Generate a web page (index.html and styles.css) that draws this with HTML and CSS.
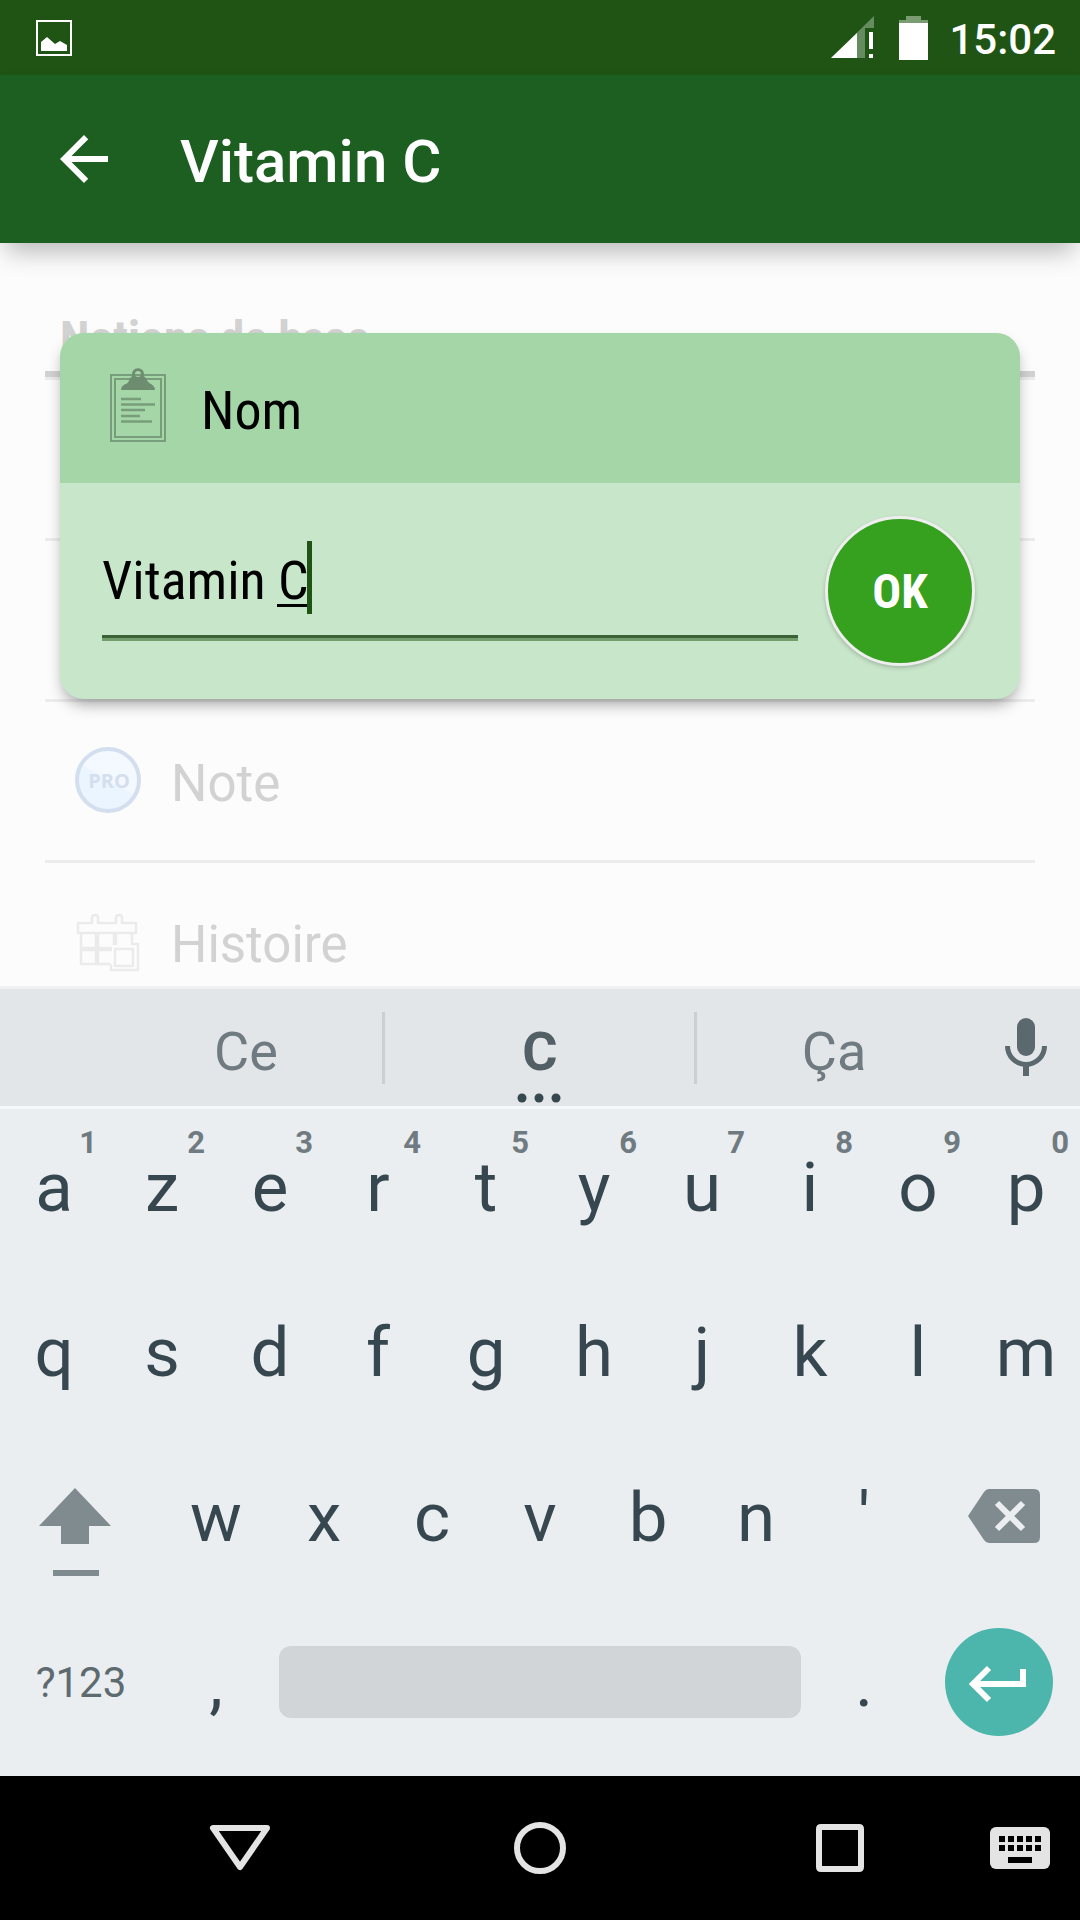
FILE: index.html
```html
<!DOCTYPE html>
<html lang="fr">
<head>
<meta charset="utf-8">
<meta name="viewport" content="width=device-width, initial-scale=1">
<title>Vitamin C</title>
<link rel="stylesheet" href="styles.css">
</head>
<body>
<div class="app">
  <div class="status-bar">
    <svg class="status-picture" width="36" height="36" viewBox="0 0 36 36" aria-hidden="true">
      <rect x="1" y="1" width="34" height="34" fill="none" stroke="#fff" stroke-width="2"/>
      <path d="M5 31V22L11 17L19 24L24 21L31 25V31Z" fill="#fff"/>
    </svg>
    <svg class="status-signal" width="43" height="43" viewBox="0 0 43 43" aria-hidden="true">
      <path d="M0 42L43 0V12H34V42Z" fill="#658c5e"/>
      <path d="M0 42L26 17V42Z" fill="#fff"/>
      <path d="M38 16H42V33H38ZM38 38H42V42H38Z" fill="#fff"/>
    </svg>
    <svg class="status-battery" width="29" height="44" viewBox="0 0 29 44" aria-hidden="true">
      <path d="M7 0H22V4H29V8H0V4H7Z" fill="#7b9b73"/>
      <path d="M0 7H29V44H0Z" fill="#fff"/>
    </svg>
    <time class="clock">15:02</time>
  </div>

  <header class="app-bar">
    <button class="back" type="button" aria-label="Retour">
      <svg width="72" height="72" viewBox="0 0 24 24" aria-hidden="true"><path fill="#fff" d="M20 11H7.83l5.59-5.59L12 4l-8 8 8 8 1.41-1.41L7.83 13H20v-2z"/></svg>
    </button>
    <h1 class="title">Vitamin C</h1>
  </header>

  <main class="content">
    <section class="details">
      <h2 class="section-title">Notions de base</h2>
      <ul class="rows">
        <li class="row"></li>
        <li class="row"></li>
        <li class="row">
          <svg class="row-icon" width="68" height="68" viewBox="0 0 68 68" aria-hidden="true">
            <circle cx="34" cy="33" r="31" fill="#f4f8ff"/>
            <path d="M7.200 17.500A31 31 0 0 0 60.800 48.500Z" fill="#eaf5ff"/>
            <circle cx="34" cy="33" r="31" fill="none" stroke="#d3dfee" stroke-width="4"/>
            <text class="pro" x="35" y="41" text-anchor="middle">PRO</text>
          </svg>
          <span class="row-label">Note</span>
        </li>
        <li class="row">
          <svg class="row-icon" width="68" height="68" viewBox="0 -1 68 68" aria-hidden="true">
            <g fill="none" stroke="#ebebeb" stroke-width="2.500" stroke-linejoin="round">
              <path d="M4 14H18V9Q18 6 21 6T24 9V14H42V9Q42 6 45 6T48 9V14H62V24H4Z"/>
              <path d="M7 24V55H36M7 39H38M7 41H38M22 24V55M24 24V55M40 24V36M42 24V36M58 24V36"/>
              <rect x="41" y="40" width="18" height="17"/>
              <path d="M58 35H64V61H37V55"/>
            </g>
          </svg>
          <span class="row-label">Histoire</span>
        </li>
      </ul>
    </section>

    <form class="dialog">
      <div class="dialog-head">
        <svg width="56" height="80" viewBox="0 0 56 80" aria-hidden="true">
          <g fill="none" stroke="#789d7a" stroke-width="2">
            <rect x="1" y="7" width="54" height="66"/>
            <rect x="5" y="11" width="46" height="58"/>
          </g>
          <path fill="#6e8d70" fill-rule="evenodd" d="M11 22Q11 17 17 15.500Q19 14 20 10L22.300 8A6 6 0 1 1 33.700 8L36 10Q37 14 40 15.500Q45 18 45 22ZM28 3A3 3 0 1 0 28 9A3 3 0 1 0 28 3Z"/>
          <path stroke="#789d7a" stroke-width="2.500" d="M11 31H31M11 36.500H45M11 42H35M11 48H30M11 53.500H42"/>
        </svg>
        <label class="dialog-label" for="name">Nom</label>
      </div>
      <div class="dialog-body">
        <div class="field">
          <input class="name-input" id="name" type="text" value="Vitamin C">
          <span class="composing"></span>
          <span class="caret"></span>
        </div>
        <button class="ok" type="button">OK</button>
      </div>
    </form>
  </main>

  <section class="keyboard" aria-label="Clavier">
    <div class="suggestions">
      <button class="suggestion" type="button">Ce</button>
      <button class="suggestion best" type="button">C
        <svg class="more" width="44" height="10" viewBox="0 0 44 10" aria-hidden="true"><g fill="#37474f"><circle cx="5" cy="5" r="4.500"/><circle cx="22" cy="5" r="4.500"/><circle cx="39" cy="5" r="4.500"/></g></svg>
      </button>
      <button class="suggestion" type="button">Ça</button>
      <button class="mic" type="button" aria-label="Saisie vocale">
        <svg width="44" height="60" viewBox="0 0 44 60" aria-hidden="true">
          <rect x="13" y="0" width="18" height="38" rx="9" fill="#5b696f"/>
          <path d="M3.500 28A18.500 18.500 0 0 0 40.500 28" fill="none" stroke="#5b696f" stroke-width="5"/>
          <path d="M19 47H25V58H19Z" fill="#5b696f"/>
        </svg>
      </button>
    </div>
    <div class="keys">
      <button class="key" type="button">a<span class="hint">1</span></button>
      <button class="key" type="button">z<span class="hint">2</span></button>
      <button class="key" type="button">e<span class="hint">3</span></button>
      <button class="key" type="button">r<span class="hint">4</span></button>
      <button class="key" type="button">t<span class="hint">5</span></button>
      <button class="key" type="button">y<span class="hint">6</span></button>
      <button class="key" type="button">u<span class="hint">7</span></button>
      <button class="key" type="button">i<span class="hint">8</span></button>
      <button class="key" type="button">o<span class="hint">9</span></button>
      <button class="key" type="button">p<span class="hint">0</span></button>

      <button class="key" type="button">q</button>
      <button class="key" type="button">s</button>
      <button class="key" type="button">d</button>
      <button class="key" type="button">f</button>
      <button class="key" type="button">g</button>
      <button class="key" type="button">h</button>
      <button class="key" type="button">j</button>
      <button class="key" type="button">k</button>
      <button class="key" type="button">l</button>
      <button class="key" type="button">m</button>

      <button class="key wide shift" type="button" aria-label="Majuscule">
        <svg width="72" height="120" viewBox="0 0 72 120" aria-hidden="true"><path fill="#808b8f" d="M36 31L72 69H50V87H22V69H0ZM14 113H60V119H14Z"/></svg>
      </button>
      <button class="key" type="button">w</button>
      <button class="key" type="button">x</button>
      <button class="key" type="button">c</button>
      <button class="key" type="button">v</button>
      <button class="key" type="button">b</button>
      <button class="key" type="button">n</button>
      <button class="key" type="button">'</button>
      <button class="key wide delete" type="button" aria-label="Effacer">
        <svg width="72" height="56" viewBox="0 0 72 56" aria-hidden="true">
          <path fill="#808b8f" d="M0 27L16 3Q18 0 21 0H66Q72 0 72 6V48Q72 54 66 54H21Q18 54 16 51Z"/>
          <path stroke="#ebeef1" stroke-width="6" d="M29 14L55 40M55 14L29 40"/>
        </svg>
      </button>

      <button class="key wide symbols" type="button">?123</button>
      <button class="key" type="button">,</button>
      <button class="key space" type="button" aria-label="Espace"><span class="space-bar"></span></button>
      <button class="key" type="button">.</button>
      <button class="key wide" type="button" aria-label="Entrée">
        <svg width="108" height="108" viewBox="0 0 108 108" aria-hidden="true">
          <circle cx="54" cy="54" r="54" fill="#4db6ac"/>
          <path d="M78 41V56H29M44 40L28 56L44 72" fill="none" stroke="#fff" stroke-width="6"/>
        </svg>
      </button>
    </div>
  </section>

  <nav class="nav-bar">
    <button class="nav-button" type="button" aria-label="Masquer le clavier">
      <svg width="62" height="48" viewBox="0 0 62 48" aria-hidden="true"><path d="M4 4H58L31 43Z" fill="none" stroke="#e4e4e4" stroke-width="6" stroke-linejoin="round"/></svg>
    </button>
    <button class="nav-button" type="button" aria-label="Accueil">
      <svg width="52" height="52" viewBox="0 0 52 52" aria-hidden="true"><circle cx="26" cy="26" r="23" fill="none" stroke="#e4e4e4" stroke-width="6"/></svg>
    </button>
    <button class="nav-button" type="button" aria-label="Applications récentes">
      <svg width="48" height="48" viewBox="0 0 48 48" aria-hidden="true"><path fill="#e4e4e4" fill-rule="evenodd" d="M5 0H43Q48 0 48 5V43Q48 48 43 48H5Q0 48 0 43V5Q0 0 5 0ZM6 6V42H42V6Z"/></svg>
    </button>
    <button class="nav-button" type="button" aria-label="Changer de clavier">
      <svg width="60" height="42" viewBox="0 0 60 42" aria-hidden="true">
        <rect width="60" height="42" rx="6" fill="#e4e4e4"/>
        <path stroke="#000" stroke-width="6" stroke-dasharray="6 3" d="M9 12H51M9 21H51"/>
        <path fill="#000" d="M18 30H42V36H18Z"/>
      </svg>
    </button>
  </nav>
</div>
</body>
</html>
```
FILE: styles.css
```css
* {
  box-sizing: border-box;
}

body {
  margin: 0;
  font-family: Roboto, sans-serif;
}

button {
  margin: 0;
  padding: 0;
  border: 0;
  background: none;
  font-family: inherit;
  color: inherit;
}

svg {
  display: block;
  flex: none;
}

.app {
  display: flex;
  flex-direction: column;
  min-height: 100vh;
  background: #fcfcfc;
}

/* System status bar */
.status-bar {
  display: flex;
  align-items: center;
  height: 75px;
  padding: 0 24px 0 36px;
  background: #1f5415;
}

.status-signal {
  margin-left: auto;
}

.status-battery {
  margin-left: 25px;
}

.clock {
  margin-left: 21px;
  padding-top: 3px;
  color: #fff;
  font-size: 42px;
  font-weight: 500;
}

/* App bar */
.app-bar {
  position: relative;
  z-index: 1;
  display: flex;
  align-items: center;
  height: 168px;
  padding: 0 48px;
  background: #1d5f21;
  box-shadow: 0 14px 24px -6px rgba(0, 0, 0, 0.28);
}

.title {
  margin: 0 0 0 60px;
  padding-top: 4px;
  color: #fff;
  font-size: 60px;
  font-weight: 500;
}

/* Faded list behind the dialog */
.content {
  position: relative;
  flex: 1 1 0;
  min-height: 500px;
  overflow: hidden;
}

.details {
  padding: 0 45px;
}

.section-title {
  height: 134px;
  margin: 0;
  padding: 67px 15px 0;
  border-bottom: 6px solid #d2d2d2;
  color: #d2d2d2;
  font-family: "Roboto Condensed", "Liberation Sans Narrow", Roboto, sans-serif;
  font-size: 48px;
  font-weight: 700;
}

.rows {
  margin: 0;
  padding: 0;
  border-top: 3px solid #ececec;
  list-style: none;
}

.row {
  display: flex;
  align-items: center;
  gap: 29px;
  height: 161px;
  padding: 0 29px;
  border-bottom: 3px solid #ececec;
  color: #d2d2d2;
  font-size: 51px;
}

.row-label {
  padding-top: 4px;
}

.pro {
  fill: #d3dfee;
  font-family: "Open Sans", sans-serif;
  font-size: 20px;
  font-weight: 700;
}

/* Edit dialog */
.dialog {
  position: absolute;
  top: 90px;
  left: 60px;
  right: 60px;
  border-radius: 24px;
  background: #c8e6c9;
  box-shadow: 0 8px 16px -4px rgba(0, 0, 0, 0.4);
  font-family: "Roboto Condensed", "Liberation Sans Narrow", Roboto, sans-serif;
}

.dialog-head {
  display: flex;
  align-items: center;
  gap: 35px;
  height: 150px;
  padding: 0 50px;
  border-radius: 24px 24px 0 0;
  background: #a5d6a7;
}

.dialog-label {
  padding-top: 4px;
  color: #000;
  font-size: 54px;
}

.dialog-body {
  display: flex;
  align-items: center;
  gap: 27px;
  height: 216px;
  padding: 0 45px 0 42px;
}

.field {
  position: relative;
  flex: 1;
  margin-bottom: 4px;
  border-bottom: 3px solid #729e6e;
}

.name-input {
  display: block;
  width: 100%;
  height: 100px;
  padding: 0 0 12px;
  border: 0;
  border-bottom: 3px solid #3c6035;
  outline: 0;
  background: none;
  color: #000;
  font-family: inherit;
  font-size: 54px;
}

.composing {
  position: absolute;
  left: 175px;
  bottom: 31px;
  width: 31px;
  height: 3px;
  background: #000;
}

.caret {
  position: absolute;
  left: 205px;
  bottom: 24px;
  width: 5px;
  height: 73px;
  background: #1f5415;
}

.ok {
  width: 150px;
  height: 150px;
  border: 3px solid #eee;
  border-radius: 50%;
  background: #36a01f;
  box-shadow: 0 2px 4px rgba(0, 0, 0, 0.2);
  color: #fff;
  font-size: 48px;
  font-weight: 700;
}

/* On-screen keyboard */
.keyboard {
  background: #ebeef1;
}

.suggestions {
  display: grid;
  grid-template-columns: 276fr 312fr 276fr 108fr;
  height: 123px;
  padding-left: 10%;
  border-top: 3px solid #f0f1f2;
  border-bottom: 3px solid #f5f7f8;
  background: #e3e6e9;
}

.suggestion {
  position: relative;
  padding-top: 8px;
  color: #6f7b80;
  font-size: 54px;
}

.best {
  color: #526066;
  font-weight: 700;
}

.best::before,
.best::after {
  content: "";
  position: absolute;
  top: 23px;
  left: -2px;
  width: 3px;
  height: 72px;
  background: #cbcfd2;
}

.best::after {
  left: auto;
  right: -1px;
}

.more {
  position: absolute;
  bottom: 3px;
  left: calc(50% - 23px);
}

.mic {
  display: flex;
  justify-content: center;
  padding-top: 29px;
}

.keys {
  display: grid;
  grid-template-columns: repeat(20, 1fr);
  grid-auto-rows: 165px;
  padding: 3px 0 4px;
}

.key {
  position: relative;
  grid-column: span 2;
  display: flex;
  align-items: center;
  justify-content: center;
  padding-bottom: 15px;
  color: #37474f;
  font-size: 69px;
}

.wide {
  grid-column: span 3;
}

.hint {
  position: absolute;
  top: 12px;
  right: 11px;
  color: #6f7b80;
  font-size: 31px;
  font-weight: 700;
}

.shift {
  padding-right: 12px;
}

.delete {
  padding-left: 10px;
}

.symbols {
  color: #5d6b70;
  font-size: 42px;
}

.space {
  grid-column: span 10;
}

.space-bar {
  flex: 1;
  height: 72px;
  margin: 0 9px;
  border-radius: 12px;
  background: #d1d5d8;
}

/* System navigation bar */
.nav-bar {
  display: grid;
  grid-template-columns: 1fr 1fr 1fr 60px;
  height: 144px;
  padding: 0 30px 0 90px;
  background: #000;
}

.nav-button {
  display: flex;
  align-items: center;
  justify-content: center;
}
```
